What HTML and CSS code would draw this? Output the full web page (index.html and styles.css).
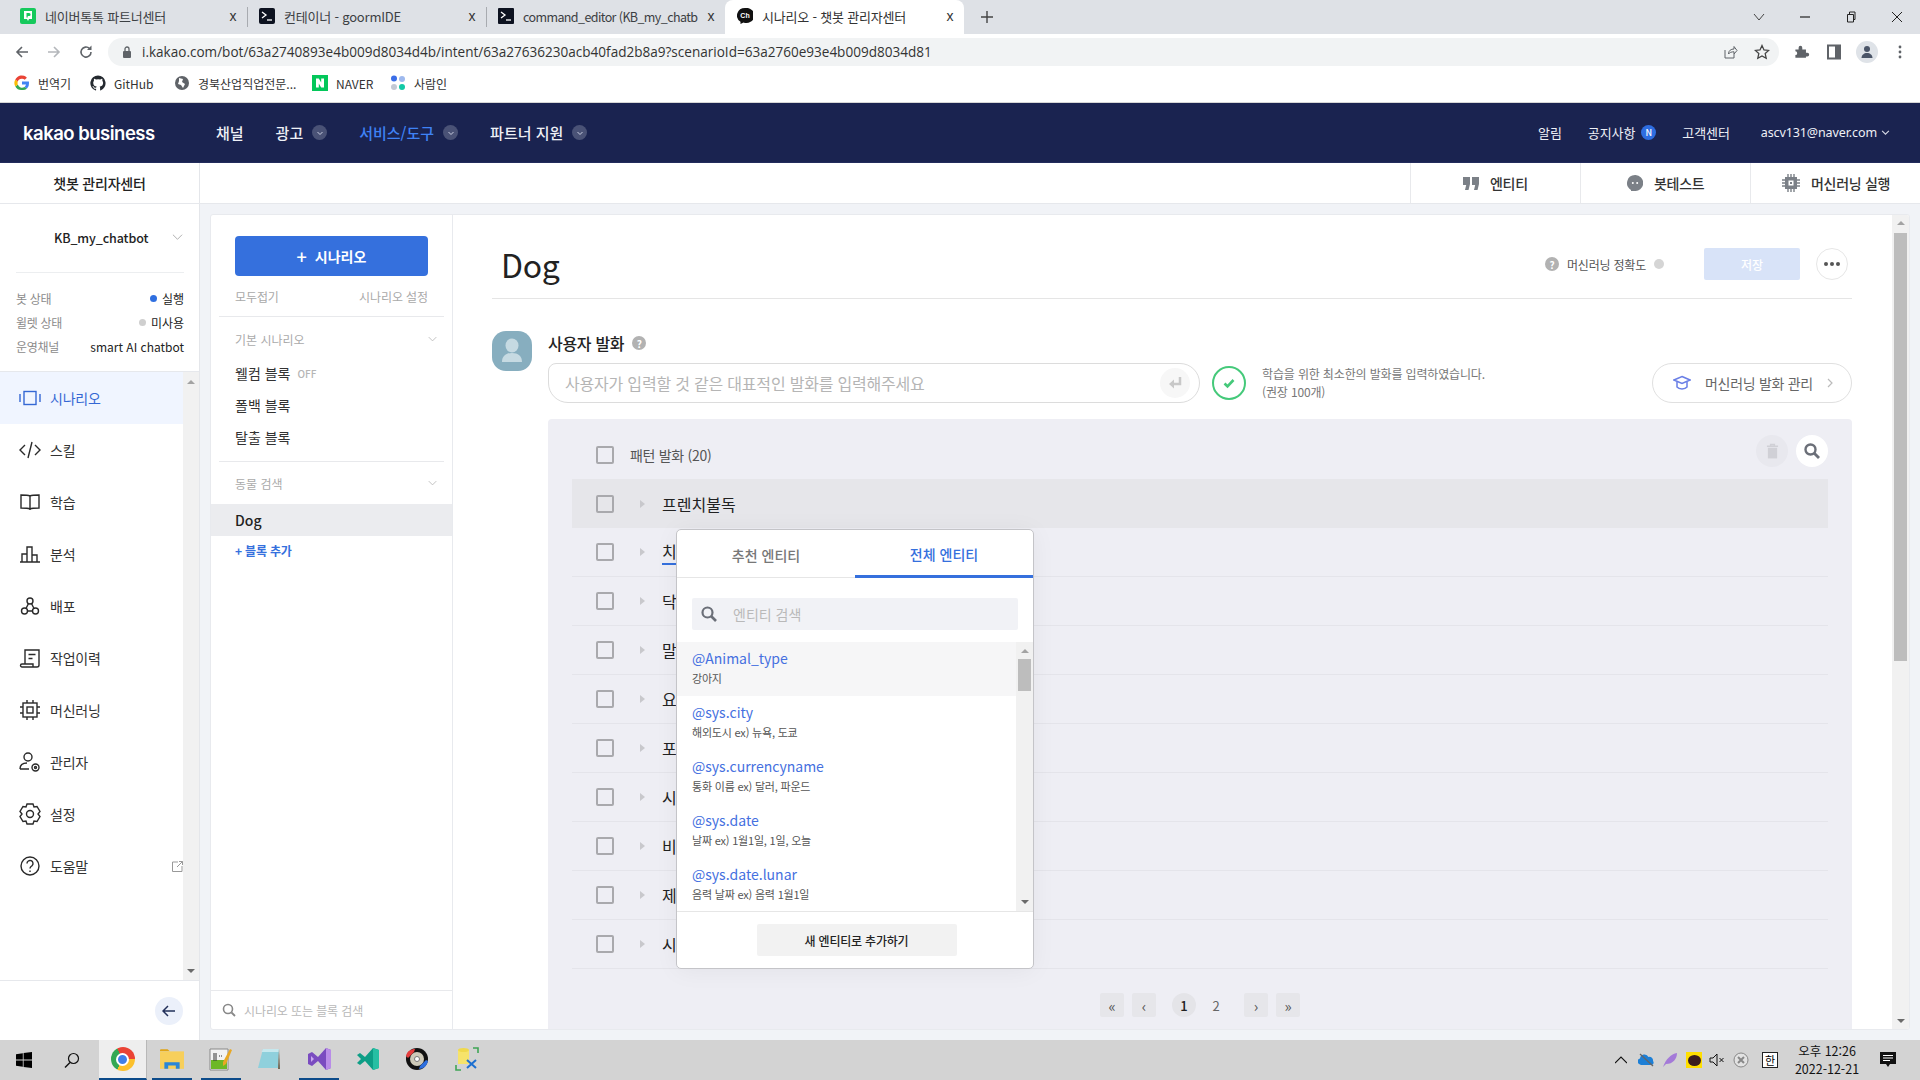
FILE: index.html
```html
<!DOCTYPE html>
<html lang="ko">
<head>
<meta charset="utf-8">
<title>시나리오 - 챗봇 관리자센터</title>
<link rel="stylesheet" href="styles.css">
</head>
<body>
<div class="tabstrip">
  <div class="tab">
    <svg class="fav" viewBox="0 0 16 16"><rect width="16" height="16" rx="2" fill="#16c95c"/><path d="M4 3h8v8H9l-1 2-1-2H4z" fill="#fff"/><path d="M6.500 5h2.600a1.400 1.400 0 010 3H7.700v1.500H6.500z" fill="#16c95c"/></svg>
    <span class="tab-title">네이버톡톡 파트너센터</span><span class="tab-x">x</span>
  </div>
  <div class="tab-sep"></div>
  <div class="tab">
    <svg class="fav" viewBox="0 0 16 16"><rect width="16" height="16" rx="2" fill="#0d1220"/><path d="M3 4l4 3-4 3" fill="none" stroke="#fff" stroke-width="1.300"/><path d="M8 12h5" stroke="#fff" stroke-width="1.300"/></svg>
    <span class="tab-title">컨테이너 - goormIDE</span><span class="tab-x">x</span>
  </div>
  <div class="tab-sep"></div>
  <div class="tab">
    <svg class="fav" viewBox="0 0 16 16"><rect width="16" height="16" rx="1" fill="#0d1220"/><path d="M3 4l4 3-4 3" fill="none" stroke="#fff" stroke-width="1.300"/><path d="M8 12h5" stroke="#fff" stroke-width="1.300"/></svg>
    <span class="tab-title tab-title-cond">command_editor (KB_my_chatb</span><span class="tab-x">x</span>
  </div>
  <div class="tab tab-active">
    <svg class="fav" viewBox="0 0 16 16"><path d="M8 0a8 7.500 0 00-4.500 13.700L3.500 16l3-1.600A8 7.500 0 108 0z" fill="#111"/><text x="8" y="10" font-size="7" font-weight="700" fill="#fff" text-anchor="middle" font-family="Liberation Sans">Ch</text></svg>
    <span class="tab-title">시나리오 - 챗봇 관리자센터</span><span class="tab-x">x</span>
  </div>
  <svg class="tab-plus" viewBox="0 0 12 12"><path d="M6 0v12M0 6h12" stroke="#444" stroke-width="1.400"/></svg>
  <div class="win-ctrl">
    <svg viewBox="0 0 12 12"><path d="M1 3l5 6 5-6" fill="none" stroke="#444"/></svg>
    <svg viewBox="0 0 12 12"><path d="M1 6h10" stroke="#222" stroke-width="1.200"/></svg>
    <svg viewBox="0 0 12 12"><path d="M2.500 3.500h6v7.500h-6zM4.500 3.500V1h5.500v7.500H8.500" fill="none" stroke="#222"/></svg>
    <svg viewBox="0 0 12 12"><path d="M1 1l10 10M11 1L1 11" stroke="#222"/></svg>
  </div>
</div>

<div class="toolbar">
  <svg class="tb-ic" viewBox="0 0 16 16"><path d="M14 8H3M8 3L3 8l5 5" fill="none" stroke="#5f6368" stroke-width="1.600"/></svg>
  <svg class="tb-ic" viewBox="0 0 16 16"><path d="M2 8h11M8 3l5 5-5 5" fill="none" stroke="#b4b7bb" stroke-width="1.600"/></svg>
  <svg class="tb-ic" viewBox="0 0 16 16"><path d="M13 8a5 5 0 11-1.500-3.500" fill="none" stroke="#5f6368" stroke-width="1.600"/><path d="M13.500 1.500v4.500H9z" fill="#5f6368"/></svg>
  <div class="omnibox">
    <svg class="lock" viewBox="0 0 10 12"><rect x="1" y="5" width="8" height="7" rx="1" fill="#5f6368"/><path d="M3 5V3a2 2 0 014 0v2" fill="none" stroke="#5f6368" stroke-width="1.300"/></svg>
    <span class="url">i.kakao.com/bot/63a2740893e4b009d8034d4b/intent/63a27636230acb40fad2b8a9?scenarioId=63a2760e93e4b009d8034d81</span>
    <svg class="omni-ic share" viewBox="0 0 16 16"><path d="M3 6v8h9v-4M6.500 10c0-3.500 2.500-5 5.500-5V2.500L15 6.500l-3 3.500V7.800c-2.500 0-4.500.7-5.500 2.200z" fill="none" stroke="#5f6368"/></svg>
    <svg class="omni-ic" viewBox="0 0 16 16"><path d="M8 1.500l2 4.400 4.700.5-3.500 3.200 1 4.700L8 11.900l-4.200 2.400 1-4.700L1.300 6.400 6 5.900z" fill="none" stroke="#444" stroke-width="1.300"/></svg>
  </div>
  <div class="tb-right">
    <svg viewBox="0 0 16 16"><path d="M1.500 6H5V4a2 2 0 014 0v2h4v3.500h1.500a2 2 0 010 4H13V15H1.500v-3a2 2 0 000-4z" fill="#5f6368" transform="scale(.92)"/></svg>
    <svg viewBox="0 0 16 16"><path d="M2 1.500h12v13H2zM10 2v12" fill="none" stroke="#5f6368" stroke-width="2"/><rect x="9" y="2" width="5" height="12" fill="#5f6368"/><rect x="4" y="3.500" width="5" height="9" fill="#fff"/></svg>
    <span class="profile"><svg viewBox="0 0 16 16"><circle cx="8" cy="5" r="3" fill="#4b5568"/><path d="M2.500 14c0-3 2.500-5 5.500-5s5.500 2 5.500 5z" fill="#4b5568"/></svg></span>
    <svg viewBox="0 0 16 16"><circle cx="8" cy="3" r="1.400" fill="#5f6368"/><circle cx="8" cy="8" r="1.400" fill="#5f6368"/><circle cx="8" cy="13" r="1.400" fill="#5f6368"/></svg>
  </div>
</div>

<div class="bookmarks">
  <span class="bm bm-1"><svg viewBox="0 0 16 16"><path d="M15 8.200c0-.6 0-1.100-.1-1.600H8v3h4a3.400 3.400 0 01-1.500 2.300l2.400 1.900A7 7 0 0015 8.200z" fill="#4285f4"/><path d="M8 15a7 7 0 004.900-1.200l-2.400-1.900A4.400 4.400 0 013.800 9.600l-2.500 1.900A7 7 0 008 15z" fill="#34a853"/><path d="M3.800 9.600a4.400 4.400 0 010-3L1.300 4.600a7 7 0 000 6.900z" fill="#fbbc05"/><path d="M8 3.800a3.800 3.800 0 012.700 1l2.200-2.100A7 7 0 001.300 4.600l2.500 2A4.200 4.200 0 018 3.800z" fill="#ea4335"/></svg>번역기</span>
  <span class="bm bm-2"><svg viewBox="0 0 16 16"><path d="M8 .500a7.700 7.700 0 00-2.400 15c.4.100.5-.2.500-.4v-1.400c-2.100.5-2.600-1-2.600-1-.3-.9-.8-1.100-.8-1.100-.7-.5.100-.5.100-.5.800.1 1.200.8 1.200.8.700 1.200 1.800.8 2.200.6.100-.5.300-.8.500-1-1.700-.2-3.500-.9-3.500-3.800 0-.8.300-1.500.8-2-.1-.2-.3-1 .1-2 0 0 .6-.2 2.100.8a7.300 7.300 0 013.900 0c1.500-1 2.100-.8 2.100-.8.400 1 .2 1.800.1 2 .5.500.8 1.200.8 2 0 3-1.800 3.600-3.500 3.800.3.200.5.700.5 1.400v2.100c0 .2.100.5.500.4A7.700 7.700 0 008 .500z" fill="#24292f"/></svg>GitHub</span>
  <span class="bm bm-3"><svg viewBox="0 0 16 16"><circle cx="8" cy="8" r="7" fill="#5f6368"/><path d="M5 3l4 1-1 3 3 2-2 4-2-3-3-1 1-3z" fill="#fff"/></svg>경북산업직업전문...</span>
  <span class="bm bm-4"><svg viewBox="0 0 16 16"><rect width="16" height="16" fill="#03c75a"/><path d="M4 3.500h2.800l2.400 4v-4H12v9H9.200l-2.400-4v4H4z" fill="#fff"/></svg>NAVER</span>
  <span class="bm bm-5"><svg viewBox="0 0 16 16"><circle cx="4" cy="3.500" r="3" fill="#3b6ee8"/><circle cx="12" cy="4" r="3" fill="#9eb9ee"/><circle cx="4" cy="12" r="3" fill="#c3c9d4"/><circle cx="12" cy="12" r="3" fill="#12c9a6"/></svg>사람인</span>
</div>

<header class="kheader">
  <span class="logo">kakao business</span>
  <nav class="knav">
    <span class="kn">채널</span>
    <span class="kn">광고<i class="kchev"><svg viewBox="0 0 8 8"><path d="M1.500 3l2.500 2.500L6.500 3" fill="none" stroke="#c9cde0"/></svg></i></span>
    <span class="kn kn-on">서비스/도구<i class="kchev"><svg viewBox="0 0 8 8"><path d="M1.500 3l2.500 2.500L6.500 3" fill="none" stroke="#c9cde0"/></svg></i></span>
    <span class="kn">파트너 지원<i class="kchev"><svg viewBox="0 0 8 8"><path d="M1.500 3l2.500 2.500L6.500 3" fill="none" stroke="#c9cde0"/></svg></i></span>
  </nav>
  <div class="kright">
    <span>알림</span>
    <span class="notice">공지사항<b class="nbadge">N</b></span>
    <span>고객센터</span>
    <span class="email">ascv131@naver.com<svg viewBox="0 0 8 8"><path d="M1 2.500L4 5.500 7 2.500" fill="none" stroke="#d5d8e5"/></svg></span>
  </div>
</header>

<div class="subheader">
  <div class="sub-left">챗봇 관리자센터</div>
  <div class="sub-tools">
    <div class="sub-tool st-1"><svg viewBox="0 0 16 16"><path d="M0 2h7v7l-1.500 6H2l1.200-5H0zM9 2h7v7l-1.500 6H11l1.200-5H9z" fill="#7b8087"/></svg>엔티티</div>
    <div class="sub-tool st-2"><svg viewBox="0 0 16 16"><path d="M8 0a8 8 0 00-4 14.900V16l3-.1A8 8 0 108 0z" fill="#7b8087"/><circle cx="5.800" cy="8" r="1" fill="#fff"/><circle cx="10.200" cy="8" r="1" fill="#fff"/></svg>봇테스트</div>
    <div class="sub-tool st-3"><svg viewBox="0 0 18 18"><path d="M6 0v18M9 0v18M12 0v18M0 6h18M0 9h18M0 12h18" stroke="#7b8087" stroke-width="1.400"/><rect x="3" y="3" width="12" height="12" fill="#7b8087"/><rect x="6.500" y="6.500" width="5" height="5" fill="#fff"/><rect x="8" y="8" width="2" height="2" fill="#7b8087"/></svg>머신러닝 실행</div>
  </div>
</div>

<div class="workspace">
  <aside class="sidebar">
    <div class="bot-select"><span>KB_my_chatbot</span><svg viewBox="0 0 12 8"><path d="M1 1.500l5 5 5-5" fill="none" stroke="#aaa"/></svg></div>
    <dl class="bot-info">
      <div class="bi-row"><dt>봇 상태</dt><dd><i class="dot dot-blue"></i>실행</dd></div>
      <div class="bi-row"><dt>윌렛 상태</dt><dd><i class="dot dot-gray"></i>미사용</dd></div>
      <div class="bi-row"><dt>운영채널</dt><dd>smart AI chatbot</dd></div>
    </dl>
    <div class="side-nav-wrap">
      <ul class="side-nav">
        <li class="sn sn-on"><svg class="ic" viewBox="0 0 22 22"><path d="M1 7v8M21 7v8"/><rect x="5" y="4.500" width="12" height="13"/></svg>시나리오</li>
        <li class="sn"><svg class="ic" viewBox="0 0 22 22"><path d="M6 6l-5 5 5 5M16 6l5 5-5 5M13 3L9 19"/></svg>스킬</li>
        <li class="sn"><svg class="ic" viewBox="0 0 22 22"><path d="M11 5c-2-1-6-1-9-1v13c3 0 7 0 9 1 2-1 6-1 9-1V4c-3 0-7 0-9 1zM11 5v14"/></svg>학습</li>
        <li class="sn"><svg class="ic" viewBox="0 0 22 22"><path d="M1 19h20M3 19v-8h5v8M8 19V4h5v15M13 19v-7h5v7"/></svg>분석</li>
        <li class="sn"><svg class="ic" viewBox="0 0 22 22"><circle cx="11" cy="6" r="3"/><circle cx="5.500" cy="16" r="3"/><circle cx="16.500" cy="16" r="3"/><path d="M8.500 16h5M9.500 8.500l-2.500 5M12.500 8.500l2.500 5"/></svg>배포</li>
        <li class="sn"><svg class="ic" viewBox="0 0 22 22"><path d="M6 17V3h14v15a2 2 0 01-2 2H3a1.500 1.500 0 010-3h11v3"/><path d="M9.500 7.500h7M9.500 11.500h4"/></svg>작업이력</li>
        <li class="sn"><svg class="ic" viewBox="0 0 22 22"><rect x="4" y="4" width="14" height="14"/><rect x="8" y="8" width="6" height="6"/><path d="M8 1v3M14 1v3M8 18v3M14 18v3M1 8h3M1 14h3M18 8h3M18 14h3"/></svg>머신러닝</li>
        <li class="sn"><svg class="ic" viewBox="0 0 22 22"><circle cx="9" cy="6" r="4"/><path d="M1 18c0-4 3-6 7-6M1 18h9"/><circle cx="16.500" cy="16.500" r="3.500"/><circle cx="16.500" cy="16.500" r="1"/></svg>관리자</li>
        <li class="sn"><svg class="ic" viewBox="0 0 22 22"><path d="M8 2h6l1 3 3-.5 3 5-2 2.500 2 2.500-3 5-3-.5-1 3H8l-1-3-3 .5-3-5L3 12 1 9.500l3-5 3 .5z" transform="translate(0 -1)"/><circle cx="11" cy="11" r="3.500"/></svg>설정</li>
        <li class="sn"><svg class="ic" viewBox="0 0 22 22"><circle cx="11" cy="11" r="9"/><path d="M8 8.500a3 3 0 115 2.200c-1 .8-2 1.300-2 2.800M11 15.500v1.500"/></svg>도움말<svg class="ext" viewBox="0 0 11 11"><path d="M6 1H.5v9.500H10V5M5 6l5.500-5.500M7 .5h3.500V4" fill="none" stroke="#999"/></svg></li>
      </ul>
      <div class="vscroll side-scroll"><i class="arr-up"></i><i class="arr-down"></i></div>
    </div>
    <div class="side-foot"><span class="backbtn"><svg viewBox="0 0 14 14"><path d="M13 7H1M6 2L1 7l5 5" fill="none" stroke="#22305a" stroke-width="1.500"/></svg></span></div>
  </aside>

  <div class="card">
    <section class="panel">
      <div class="panel-top">
        <button class="btn-add"><span class="plus">+</span>시나리오</button>
        <div class="panel-links"><span>모두접기</span><span>시나리오 설정</span></div>
      </div>
      <div class="group">
        <div class="group-head"><span>기본 시나리오</span><svg viewBox="0 0 12 8"><path d="M1 1.500l5 5 5-5" fill="none" stroke="#bbb" stroke-width="1.200"/></svg></div>
        <div class="blk">웰컴 블록<em>OFF</em></div>
        <div class="blk">폴백 블록</div>
        <div class="blk">탈출 블록</div>
      </div>
      <div class="group group-2">
        <div class="group-head"><span>동물 검색</span><svg viewBox="0 0 12 8"><path d="M1 1.500l5 5 5-5" fill="none" stroke="#bbb" stroke-width="1.200"/></svg></div>
        <div class="blk blk-on">Dog</div>
        <div class="blk-add">+ 블록 추가</div>
      </div>
      <div class="panel-search"><svg viewBox="0 0 14 14"><circle cx="6" cy="6" r="4.500" fill="none" stroke="#888" stroke-width="1.600"/><path d="M9.500 9.500L13 13" stroke="#888" stroke-width="1.800"/></svg>시나리오 또는 블록 검색</div>
    </section>

    <main class="main">
      <div class="main-head">
        <h1>Dog</h1>
        <div class="head-right">
          <i class="qmark">?</i><span class="acc">머신러닝 정확도</span><i class="acc-dot"></i>
          <button class="btn-save">저장</button>
          <span class="btn-more"><i></i><i></i><i></i></span>
        </div>
      </div>

      <div class="utter">
        <div class="avatar"><svg viewBox="0 0 40 40"><ellipse cx="20" cy="14.500" rx="6.500" ry="7" fill="#c6dae2"/><path d="M10 31c0-6 4-9 10-9s10 3 10 9z" fill="#c6dae2"/></svg></div>
        <div class="utter-body">
          <div class="utter-title"><span>사용자 발화</span><i class="qmark">?</i></div>
          <div class="utter-input-row">
            <div class="utter-input"><span>사용자가 입력할 것 같은 대표적인 발화를 입력해주세요</span><i class="enter"><svg viewBox="0 0 16 16"><path d="M13 2v7H5" fill="none" stroke="#c8c8c8" stroke-width="2.500"/><path d="M7 4.500L2 9l5 4.500z" fill="#c8c8c8"/></svg></i></div>
            <span class="okcheck"><svg viewBox="0 0 16 16"><path d="M3.500 8.500l3 2.800L12.500 5" fill="none" stroke="#45c97a" stroke-width="2.600"/></svg></span>
            <p class="oktext">학습을 위한 최소한의 발화를 입력하였습니다.<br>(권장 100개)</p>
            <div class="btn-ml"><svg viewBox="0 0 18 16"><path d="M9 1.500L17 5 9 8.500 1 5z" fill="none" stroke="#6a7fe6" stroke-width="1.500"/><path d="M4 7v5c2 2.500 8 2.500 10 0V7" fill="none" stroke="#6a7fe6" stroke-width="1.500"/></svg><span>머신러닝 발화 관리</span><svg class="ml-chev" viewBox="0 0 6 10"><path d="M1 1l4 4-4 4" fill="none" stroke="#bbb" stroke-width="1.200"/></svg></div>
          </div>

          <div class="patterns">
            <div class="pat-head">
              <i class="chk"></i><span class="pat-title">패턴 발화 (20)</span>
              <span class="roundbtn rb-trash"><svg viewBox="0 0 14 16"><path d="M1 3h12M5 3V1h4v2" stroke="#d0d0d6" stroke-width="1.600" fill="none"/><path d="M2 4.500h10V16H2z" fill="#d0d0d6"/></svg></span>
              <span class="roundbtn rb-search"><svg viewBox="0 0 16 16"><circle cx="6.500" cy="6.500" r="5" fill="none" stroke="#6b6f78" stroke-width="2.400"/><path d="M10 10l5 5" stroke="#6b6f78" stroke-width="2.800"/></svg></span>
            </div>
            <div class="pat-row pat-row-hl"><i class="chk"></i><i class="tri"></i>프렌치불독</div>
            <div class="pat-row"><i class="chk"></i><i class="tri"></i><span class="pat-cut tagged">치</span></div>
            <div class="pat-row"><i class="chk"></i><i class="tri"></i><span class="pat-cut">닥</span></div>
            <div class="pat-row"><i class="chk"></i><i class="tri"></i><span class="pat-cut">말</span></div>
            <div class="pat-row"><i class="chk"></i><i class="tri"></i><span class="pat-cut">요</span></div>
            <div class="pat-row"><i class="chk"></i><i class="tri"></i><span class="pat-cut">포</span></div>
            <div class="pat-row"><i class="chk"></i><i class="tri"></i><span class="pat-cut">시</span></div>
            <div class="pat-row"><i class="chk"></i><i class="tri"></i><span class="pat-cut">비</span></div>
            <div class="pat-row"><i class="chk"></i><i class="tri"></i><span class="pat-cut">제</span></div>
            <div class="pat-row"><i class="chk"></i><i class="tri"></i><span class="pat-cut">시</span></div>
            <div class="pager">
              <span class="pg pg-box">«</span><span class="pg pg-box">‹</span>
              <span class="pg pg-cur">1</span><span class="pg pg-num">2</span>
              <span class="pg pg-box">›</span><span class="pg pg-box">»</span>
            </div>

            <div class="popup">
              <div class="pop-tabs"><span class="pt">추천 엔티티</span><span class="pt pt-on">전체 엔티티</span></div>
              <div class="pop-search"><svg viewBox="0 0 16 16"><circle cx="6.500" cy="6.500" r="5" fill="none" stroke="#6b6f78" stroke-width="2.200"/><path d="M10 10l5 5" stroke="#6b6f78" stroke-width="2.600"/></svg>엔티티 검색</div>
              <div class="pop-list">
                <ul>
                  <li class="pi-on"><b>@Animal_type</b><small>강아지</small></li>
                  <li><b>@sys.city</b><small>해외도시 ex) 뉴욕, 도쿄</small></li>
                  <li><b>@sys.currencyname</b><small>통화 이름 ex) 달러, 파운드</small></li>
                  <li><b>@sys.date</b><small>날짜 ex) 1월1일, 1일, 오늘</small></li>
                  <li><b>@sys.date.lunar</b><small>음력 날짜 ex) 음력 1월1일</small></li>
                </ul>
                <div class="vscroll pop-scroll"><i class="arr-up"></i><i class="pop-thumb"></i><i class="arr-down"></i></div>
              </div>
              <div class="pop-foot"><span class="btn-newent">새 엔티티로 추가하기</span></div>
            </div>
          </div>
        </div>
      </div>
    </main>
    <div class="vscroll main-scroll"><i class="arr-up"></i><i class="main-thumb"></i><i class="arr-down"></i></div>
  </div>
</div>

<footer class="taskbar">
  <svg class="t-start" viewBox="0 0 16 16"><path d="M0 2.200l6.800-1v6.300H0zM7.600 1.100L16 0v7.500H7.600zM0 8.400h6.800v6.400l-6.800-1zM7.600 8.400H16V16l-8.400-1.100z" fill="#000"/></svg>
  <svg class="t-search" viewBox="0 0 16 16"><circle cx="9.500" cy="6.500" r="5" fill="none" stroke="#111" stroke-width="1.200"/><path d="M6 10.500L1 15.500" stroke="#111" stroke-width="1.400"/></svg>
  <span class="t-app t-chrome"><i class="chrome"><i></i></i></span>
  <span class="t-app t-files"><svg viewBox="0 0 22 20"><path d="M0 2a1 1 0 011-1h6l2 2H0z" fill="#e0a416"/><path d="M0 3h22v16H0z" fill="#f7cf5b"/><path d="M4 13h14v6h-3.500v-3h-7v3H4z" fill="#2a86d8"/></svg></span>
  <span class="t-app t-npp"><svg viewBox="0 0 24 24"><path d="M1 2h18v21H1z" fill="#f3f3f3" stroke="#888"/><path d="M2 13h16v9H2z" fill="#6db827"/><path d="M5 6v8M7 6v8M10 9h1M12 9h1" stroke="#333"/><path d="M14 15L21 2l2 1-6 14-3 2z" fill="#e9a823"/></svg></span>
  <span class="t-app t-note"><svg viewBox="0 0 24 24"><path d="M6 2h16l-1 19H1z" fill="#8fd0dc"/><path d="M6 2h16l-.2 3H4.500z" fill="#c6e8ee"/><path d="M22 2l1 20h-2z" fill="#6d6552"/></svg></span>
  <span class="t-app t-vs"><svg viewBox="0 0 24 24"><path d="M1 7l4-2 6 5L19 1l5 2v18l-5 2-8-9-6 5-4-2z" fill="#7a4bc0"/><path d="M19 1l5 2v18l-5 2z" fill="#b98ce8"/><path d="M4 9v6l3-3z" fill="#c9a8f0"/></svg></span>
  <span class="t-app t-code"><svg viewBox="0 0 24 24"><path d="M1 8l3-2 5 4 8-9 6 2v18l-6 2-8-9-5 4-3-2 4-4z" fill="#0d9e86"/><path d="M17 1l6 2v18l-6 2z" fill="#26bfa3"/></svg></span>
  <span class="t-app t-disc"><svg viewBox="0 0 24 24"><circle cx="12" cy="12" r="11" fill="#111"/><circle cx="12" cy="12" r="7" fill="#cdc9b8"/><circle cx="12" cy="12" r="2.500" fill="#fff" stroke="#777"/><path d="M1 9C2 4 6 2 10 2L9 5 3 11z" fill="#e53d3d"/><path d="M23 14c-1 5-5 8-9 8l1-3 6-6z" fill="#2d6fe0"/></svg></span>
  <span class="t-app t-tool"><svg viewBox="0 0 24 24"><path d="M1 18v5h5M18 1h5v5" fill="none" stroke="#3fa556" stroke-width="1.600"/><path d="M3 3h11v14H3z" fill="#f6e36a"/><ellipse cx="8.500" cy="3" rx="5.500" ry="2" fill="#f0d94c"/><path d="M12 13l9 8M21 13l-9 8" stroke="#1c6fd0" stroke-width="2"/></svg></span>
  <div class="tray">
    <svg class="tr-chev" viewBox="0 0 12 8"><path d="M0 7l6-6 6 6" fill="none" stroke="#111" stroke-width="1.100"/></svg>
    <svg class="tr-cloud" viewBox="0 0 16 16"><path d="M1 12a3 3 0 011-5.500A4.500 4.500 0 0110.500 5 3.500 3.500 0 0115 9a2.500 2.500 0 01-1 4H3z" fill="#1d7fd6"/><path d="M2 2l13 12" stroke="#666" stroke-width="1.300"/></svg>
    <svg class="tr-feather" viewBox="0 0 16 16"><path d="M1 15C4 7 9 2 15 1c0 6-4 11-11 11z" fill="#a47ad8"/></svg>
    <span class="tr-kakao"><i></i></span>
    <svg class="tr-mute" viewBox="0 0 16 16"><path d="M1 6h3l4-4v12l-4-4H1z" fill="none" stroke="#111"/><path d="M10.500 6l4 4M14.500 6l-4 4" stroke="#111"/></svg>
    <svg class="tr-x" viewBox="0 0 16 16"><circle cx="8" cy="8" r="7" fill="#e2e2e2" stroke="#888"/><path d="M5 5l6 6M11 5l-6 6" stroke="#888" stroke-width="2"/></svg>
    <span class="tr-ime">한</span>
    <span class="tr-clock">오후 12:26<br>2022-12-21</span>
    <svg class="tr-msg" viewBox="0 0 16 16"><path d="M0 0h16v12h-6l-2 3-2-3H0z" fill="#111"/><path d="M3 3.500h10M3 6h10M3 8.500h7" stroke="#fff"/></svg>
  </div>
</footer>
</body>
</html>
```
FILE: styles.css
```css
* { box-sizing: border-box; }
html, body { margin: 0; padding: 0; }
body { width: 1920px; height: 1080px; overflow: hidden; display: flex; flex-direction: column; background: #f1f3f7; color: #222; font-family: "Noto Sans CJK KR", "Noto Sans", sans-serif; font-size: 12px; }
i, em { font-style: normal; }
ul, dl, dd, p, h1 { margin: 0; padding: 0; list-style: none; }
button { font-family: inherit; border: 0; }
svg { display: block; flex: none; }

/* browser chrome */
.tabstrip { height: 34px; flex: none; background: #dee1e6; display: flex; align-items: flex-end; padding-left: 8px; }
.tab { width: 239px; height: 34px; display: flex; align-items: center; padding: 0 0 2px 12px; color: #3c4043; flex: none; }
.tab-active { background: #fff; border-radius: 8px 8px 0 0; color: #333; }
.fav { width: 16px; height: 16px; margin-right: 9px; }
.tab-title { width: 177px; overflow: hidden; white-space: nowrap; font-size: 13px; letter-spacing: -0.2px; }
.tab-title-cond { font-size: 12.500px; letter-spacing: -0.600px; }
.tab-x { width: 14px; font-size: 14px; line-height: 1; color: #333; text-align: center; margin-left: 4px; font-family: "Liberation Sans", sans-serif; }
.tab-sep { width: 1px; height: 20px; background: #a8abb0; align-self: center; margin-right: -1px; }
.tab-plus { width: 12px; height: 12px; margin: 0 0 11px 17px; }
.win-ctrl { margin-left: auto; height: 34px; display: flex; align-items: center; gap: 34px; padding-right: 17px; }
.win-ctrl svg { width: 12px; height: 12px; }
.toolbar { height: 36px; flex: none; background: #fff; display: flex; align-items: center; padding-left: 14px; }
.tb-ic { width: 16px; height: 16px; margin-right: 16px; }
.omnibox { width: 1671px; height: 28px; margin-left: -2px; background: #f1f3f4; border-radius: 14px; display: flex; align-items: center; padding: 0 9px 0 14px; }
.lock { width: 10px; height: 12px; margin-right: 10px; }
.url { font-family: "Open Sans", sans-serif; font-size: 13.550px; color: #333; white-space: nowrap; }
.omni-ic { width: 16px; height: 16px; }
.share { margin-left: auto; margin-right: 16px; }
.tb-right { display: flex; align-items: center; gap: 16px; margin-left: 15px; }
.tb-right svg { width: 16px; height: 16px; }
.profile { width: 22px; height: 22px; border-radius: 50%; background: #dfe3e8; display: flex; align-items: center; justify-content: center; margin: 0 -2px; }
.bookmarks { height: 33px; flex: none; background: #fff; border-bottom: 1px solid #d6d6d6; display: flex; align-items: center; padding: 0 0 6px 14px; font-size: 12px; color: #333; }
.bm { display: flex; align-items: center; gap: 8px; white-space: nowrap; }
.bm svg { width: 16px; height: 16px; }
.bm-1 { width: 76px; }
.bm-2 { width: 87px; }
.bm-3 { width: 129px; margin-left: -3px; }
.bm-4 { width: 78px; margin-left: 9px; }
.bm-5 { margin-left: 0; }

/* kakao header */
.kheader { height: 60px; flex: none; background: #1a2350; color: #fff; display: flex; align-items: center; padding-left: 23px; border-bottom: 1px solid #232c5c; }
.logo { font-family: "Inter", sans-serif; font-weight: 600; font-size: 18.500px; letter-spacing: -0.500px; width: 193px; white-space: nowrap; }
.knav { display: flex; align-items: center; font-size: 15px; font-weight: 500; color: #eef0f6; gap: 32px; }
.kn { display: flex; align-items: center; gap: 9px; white-space: nowrap; }
.kn-on { color: #3f82f5; }
.kchev { width: 15px; height: 15px; border-radius: 50%; background: #4a5276; display: flex; align-items: center; justify-content: center; }
.kchev svg { width: 8px; height: 8px; }
.kright { margin-left: auto; display: flex; align-items: center; font-size: 13px; color: #eef0f6; gap: 26px; padding-right: 30px; letter-spacing: -0.100px; }
.notice { display: flex; align-items: center; gap: 6px; }
.nbadge { width: 15px; height: 15px; border-radius: 50%; background: #2e6de0; color: #fff; font-size: 9px; display: flex; align-items: center; justify-content: center; font-weight: 500; }
.email { display: flex; align-items: center; gap: 4px; font-family: "Noto Sans", sans-serif; font-size: 12.500px; letter-spacing: -0.100px; margin-left: 5px; }
.email svg { width: 9px; height: 9px; }
.subheader { height: 41px; flex: none; background: #fff; border-bottom: 1px solid #e6e8ec; display: flex; }
.sub-left { width: 200px; border-right: 1px solid #e4e6ea; display: flex; align-items: center; justify-content: center; font-size: 14px; font-weight: 500; color: #222; letter-spacing: -0.200px; }
.sub-tools { margin-left: auto; display: flex; }
.sub-tool { height: 40px; border-left: 1px solid #e8e9ec; display: flex; align-items: center; font-size: 14px; font-weight: 500; color: #333; letter-spacing: -0.300px; }
.sub-tool svg { width: 16px; height: 16px; margin-right: 11px; }
.st-1 { width: 170px; padding-left: 52px; }
.st-2 { width: 170px; padding-left: 46px; }
.st-3 { width: 170px; padding-left: 31px; }
.st-3 svg { width: 18px; height: 18px; margin-right: 11px; }

/* workspace */
.workspace { height: 836px; flex: none; display: flex; }
.sidebar { width: 200px; flex: none; background: #fff; border-right: 1px solid #e4e6ea; display: flex; flex-direction: column; }
.bot-select { height: 68px; margin: 0 16px 0 0; padding: 0 0 2px 54px; display: flex; align-items: center; justify-content: space-between; font-size: 12.500px; font-weight: 500; flex: none; letter-spacing: -0.100px; }
.bot-select svg { width: 11px; height: 8px; }
.bot-info { margin: 0 15px 0 16px; border-top: 1px solid #eceef0; padding-top: 13px; height: 99px; flex: none; }
.bi-row { height: 24px; display: flex; align-items: center; justify-content: space-between; font-size: 12px; }
.bi-row dt { color: #8b8b8b; letter-spacing: -0.300px; }
.bi-row dd { color: #222; display: flex; align-items: center; gap: 5px; }
.dot { width: 7px; height: 7px; border-radius: 50%; display: block; }
.dot-blue { background: #2f6fe0; }
.dot-gray { background: #cfcfcf; }
.side-nav-wrap { height: 610px; flex: none; display: flex; border-top: 1px solid #e6e8ec; border-bottom: 1px solid #e6e8ec; }
.side-nav { flex: 1; }
.sn { height: 52px; display: flex; align-items: center; padding-left: 19px; font-size: 14px; color: #333; gap: 9px; letter-spacing: -0.200px; }
.sn-on { background: #f0f5ff; color: #3568d4; }
.sn .ic { width: 22px; height: 22px; fill: none; stroke: #2a2a2a; stroke-width: 1.400; }
.sn-on .ic { stroke: #3568d4; }
.ext { width: 11px; height: 11px; margin-left: auto; }
.vscroll { background: #f1f1f1; position: relative; display: flex; flex-direction: column; align-items: center; flex: none; }
.side-scroll { width: 16px; justify-content: space-between; padding: 8px 0 7px; }
.arr-up { width: 0; height: 0; border-left: 4px solid transparent; border-right: 4px solid transparent; border-bottom: 4px solid #a3a3a3; }
.arr-down { width: 0; height: 0; border-left: 4px solid transparent; border-right: 4px solid transparent; border-top: 4px solid #6a6a6a; }
.side-foot { flex: 1; display: flex; align-items: flex-start; justify-content: flex-end; padding: 16px 16px 0 0; }
.backbtn { width: 28px; height: 28px; border-radius: 50%; background: #ebf0fa; display: flex; align-items: center; justify-content: center; }
.backbtn svg { width: 14px; height: 14px; }

.card { width: 1700px; height: 816px; margin: 10px 0 0 10px; background: #fff; border: 1px solid #e8eaee; border-radius: 3px; display: flex; overflow: hidden; flex: none; }
.panel { width: 242px; flex: none; border-right: 1px solid #e8eaee; display: flex; flex-direction: column; }
.panel-top { padding: 21px 24px 0 24px; height: 101px; }
.btn-add { width: 193px; height: 40px; background: #3570dd; color: #fff; font-size: 14px; font-weight: 700; border-radius: 4px; display: flex; align-items: center; justify-content: center; gap: 8px; }
.plus { font-size: 18px; line-height: 1; font-weight: 500; }
.panel-links { display: flex; justify-content: space-between; margin-top: 12px; font-size: 12px; color: #a9a9a9; letter-spacing: -0.100px; }
.group { margin: 0 8px; border-top: 1px solid #e8e9ec; padding-top: 9px; height: 145px; }
.group-head { height: 26px; display: flex; align-items: center; justify-content: space-between; padding: 0 7px 0 16px; font-size: 12px; color: #aaa; margin-bottom: 5px; }
.group-head svg { width: 9px; height: 6px; }
.blk { height: 32px; display: flex; align-items: center; padding-left: 16px; font-size: 14px; color: #333; }
.blk em { font-size: 10px; font-weight: 500; color: #b5b5b5; margin-left: 7px; }
.group-2 { margin: 0; padding-top: 10px; height: auto; border-top: 0; }
.group-2::before { content: ""; display: block; border-top: 1px solid #e8e9ec; margin: -10px 8px 8px; }
.group-2 .group-head { padding: 0 15px 0 24px; margin-bottom: 8px; }
.group-2 .blk { padding-left: 24px; }
.blk-on { background: #ebecef; font-weight: 500; color: #222; }
.blk-add { padding-left: 24px; margin-top: 6px; font-size: 12px; font-weight: 700; color: #3570dd; letter-spacing: -0.200px; }
.panel-search { margin-top: auto; height: 39px; border-top: 1px solid #e8e9ec; display: flex; align-items: center; padding-left: 11px; gap: 8px; font-size: 12px; color: #b8b8b8; letter-spacing: -0.100px; }
.panel-search svg { width: 14px; height: 14px; }

.main { width: 1439px; flex: none; padding: 0 40px 0 39px; overflow: hidden; }
.main-head { height: 84px; border-bottom: 1px solid #e5e5e5; display: flex; align-items: flex-start; justify-content: space-between; padding-left: 9px; }
.main-head h1 { font-size: 32px; font-weight: 400; line-height: 46px; margin-top: 26px; color: #222; letter-spacing: -0.300px; }
.head-right { display: flex; align-items: center; height: 32px; margin: 33px 4px 0 0; }
.qmark { width: 14px; height: 14px; border-radius: 50%; background: #b2b2b2; color: #fff; font-size: 10px; font-weight: 700; display: flex; align-items: center; justify-content: center; }
.acc { margin-left: 8px; font-size: 12px; color: #555; letter-spacing: -0.200px; }
.acc-dot { width: 10px; height: 10px; border-radius: 50%; background: #d5d5d5; margin-left: 8px; }
.btn-save { width: 96px; height: 32px; margin-left: 40px; background: #d8e3f8; color: #fff; font-size: 12px; font-weight: 500; border-radius: 2px; }
.btn-more { width: 32px; height: 32px; border: 1px solid #e6e6e6; border-radius: 50%; margin-left: 16px; display: flex; align-items: center; justify-content: center; gap: 2px; }
.btn-more i { width: 4px; height: 4px; border-radius: 50%; background: #555; }

.utter { display: flex; gap: 16px; margin-top: 32px; }
.avatar { width: 40px; height: 40px; flex: none; background: #87aebf; border-radius: 14px; }
.avatar svg { width: 40px; height: 40px; }
.utter-body { flex: 1; min-width: 0; }
.utter-title { height: 32px; display: flex; align-items: center; gap: 8px; font-size: 16px; font-weight: 500; color: #222; padding-bottom: 8px; letter-spacing: -0.300px; }
.utter-input-row { height: 40px; display: flex; align-items: center; }
.utter-input { width: 652px; height: 40px; border: 1px solid #dcdcdc; border-radius: 8px 20px 20px 20px; display: flex; align-items: center; justify-content: space-between; padding: 0 9px 0 16px; font-size: 16px; color: #b5b5b5; letter-spacing: -0.200px; }
.enter { width: 30px; height: 30px; border-radius: 50%; background: #f7f7f7; display: flex; align-items: center; justify-content: center; }
.enter svg { width: 16px; height: 16px; }
.okcheck { width: 34px; height: 34px; margin-left: 12px; border: 2px solid #45c97a; border-radius: 50%; display: flex; align-items: center; justify-content: center; flex: none; }
.okcheck svg { width: 16px; height: 16px; }
.oktext { margin-left: 16px; font-size: 12px; line-height: 18px; color: #777; letter-spacing: -0.150px; white-space: nowrap; }
.btn-ml { margin-left: auto; width: 200px; height: 40px; border: 1px solid #e0e0e0; border-radius: 20px; display: flex; align-items: center; padding-left: 20px; font-size: 14px; color: #666; letter-spacing: -0.300px; }
.btn-ml svg { width: 18px; height: 16px; margin-right: 14px; }
.btn-ml .ml-chev { width: 6px; height: 10px; margin: 0 0 0 14px; }

.patterns { position: relative; margin-top: 16px; height: 640px; background: #eeeef4; border-radius: 4px 4px 0 0; padding: 0 24px; }
.pat-head { height: 60px; display: flex; align-items: center; padding: 12px 0 0 24px; }
.chk { width: 18px; height: 18px; border: 2px solid #a9a9ad; border-radius: 2px; background: transparent; flex: none; display: block; }
.pat-title { margin-left: 16px; font-size: 14px; color: #555; letter-spacing: -0.300px; }
.roundbtn { width: 32px; height: 32px; border-radius: 50%; display: flex; align-items: center; justify-content: center; margin-bottom: 8px; }
.rb-trash { margin-left: auto; background: #e8e8ee; }
.rb-trash svg { width: 13px; height: 16px; }
.rb-search { margin-left: 8px; background: #fff; }
.rb-search svg { width: 16px; height: 16px; }
.pat-row { height: 49px; display: flex; align-items: center; padding-left: 24px; border-bottom: 1px solid #e4e4ea; font-size: 16px; color: #222; }
.pat-row-hl { background: #e6e6ea; border-bottom: 0; }
.tri { width: 0; height: 0; border-top: 4px solid transparent; border-bottom: 4px solid transparent; border-left: 5px solid #c8c8cc; margin: 0 17px 0 26px; flex: none; }
.pat-cut { width: 14px; overflow: hidden; white-space: nowrap; }
.tagged { border-bottom: 2px solid #3570dd; }
.pager { display: flex; align-items: center; justify-content: center; margin-top: 24px; }
.pg { width: 24px; height: 24px; display: flex; align-items: center; justify-content: center; font-size: 13px; color: #666; margin-right: 8px; border-radius: 2px; }
.pg:last-child { margin-right: 0; }
.pg-box { background: #e6e6ea; font-size: 15px; color: #555; }
.pg-cur { background: #e4e4e8; border-radius: 50%; margin-left: 8px; color: #222; font-weight: 500; }
.pg-num { margin-right: 16px; }
.popup { position: absolute; left: 128px; top: 110px; width: 358px; height: 440px; background: #fff; border: 1px solid #c4c4c8; border-radius: 5px; box-shadow: 0 2px 24px rgba(0,0,0,.05); display: flex; flex-direction: column; overflow: hidden; }
.pop-tabs { height: 48px; flex: none; display: flex; border-bottom: 1px solid #e6e6e6; }
.pt { width: 50%; display: flex; align-items: center; justify-content: center; font-size: 14px; font-weight: 500; color: #777; padding-top: 3px; }
.pt-on { color: #3570dd; border-bottom: 3px solid #3570dd; margin-bottom: -1px; }
.pop-search { height: 32px; flex: none; margin: 20px 15px 12px; background: #f1f2f6; border-radius: 2px; display: flex; align-items: center; padding-left: 9px; gap: 16px; font-size: 14px; color: #b9b9b9; }
.pop-search svg { width: 16px; height: 16px; }
.pop-list { height: 270px; flex: none; display: flex; border-bottom: 1px solid #e6e6e6; }
.pop-list ul { flex: 1; }
.pop-list li { height: 54px; padding: 6px 0 0 15px; }
.pi-on { background: #f6f6f7; }
.pop-list b { display: block; font-weight: 400; font-size: 14px; line-height: 20px; color: #4570e0; }
.pop-list small { display: block; font-size: 11px; line-height: 18px; margin-top: 1px; color: #555; letter-spacing: -0.200px; }
.pop-scroll { width: 17px; padding-top: 7px; }
.pop-thumb { width: 13px; height: 32px; margin-top: 6px; background: #bdbdbd; }
.pop-scroll .arr-down { margin-top: auto; margin-bottom: 7px; }
.pop-foot { flex: 1; display: flex; align-items: center; justify-content: center; padding-left: 3px; }
.btn-newent { width: 200px; height: 32px; background: #f2f2f2; border-radius: 2px; display: flex; align-items: center; justify-content: center; font-size: 12px; font-weight: 500; color: #222; letter-spacing: -0.200px; }
.main-scroll { width: 17px; padding: 6px 0; }
.main-thumb { width: 13px; height: 428px; margin-top: 8px; background: #bdbdbd; }
.main-scroll .arr-down { margin-top: auto; }

/* taskbar */
.taskbar { height: 40px; flex: none; background: #d3d3d3; display: flex; align-items: center; padding-left: 16px; }
.t-start { width: 16px; height: 16px; }
.t-search { width: 16px; height: 16px; margin-left: 32px; }
.t-app { height: 40px; display: flex; align-items: center; justify-content: center; border-bottom: 2px solid transparent; flex: none; }
.t-app svg { width: 24px; height: 24px; }
.t-chrome { width: 48px; margin-left: 19px; background: #eeeeee; border-bottom-color: #0c4b8a; border-right: 1px solid #b8b8b8; }
.chrome { width: 24px; height: 24px; border-radius: 50%; background: conic-gradient(#ea4335 0 90deg, #fbc02d 90deg 210deg, #34a853 210deg 330deg, #ea4335 330deg); display: flex; align-items: center; justify-content: center; }
.chrome i { border-radius: 50%; background: #3f7fe8; border: 2px solid #fff; box-sizing: content-box; width: 9px; height: 9px; }
.t-files { width: 40px; margin-left: 5px; border-bottom-color: #0c4b8a; }
.t-npp { width: 40px; margin-left: 9px; border-bottom-color: #0c4b8a; }
.t-note { width: 40px; margin-left: 8px; }
.t-vs { width: 40px; margin-left: 10px; border-bottom-color: #0c4b8a; }
.t-code { width: 40px; margin-left: 9px; }
.t-disc { width: 40px; margin-left: 9px; }
.t-tool { width: 40px; margin-left: 10px; }
.tray { margin-left: auto; display: flex; align-items: center; height: 40px; padding-right: 24px; }
.tr-chev { width: 12px; height: 8px; }
.tr-cloud { width: 16px; height: 16px; margin-left: 11px; }
.tr-feather { width: 16px; height: 16px; margin-left: 8px; }
.tr-kakao { width: 16px; height: 16px; background: #ffdf00; margin-left: 8px; display: flex; align-items: center; justify-content: center; }
.tr-kakao i { width: 13px; height: 11px; border-radius: 50%; background: #3a1d1d; }
.tr-mute { width: 16px; height: 16px; margin-left: 7px; }
.tr-x { width: 16px; height: 16px; margin-left: 8px; }
.tr-ime { width: 16px; height: 16px; margin-left: 13px; background: #fff; border: 1px solid #222; display: flex; align-items: center; justify-content: center; font-size: 11px; line-height: 1; color: #000; }
.tr-clock { width: 80px; margin-left: 9px; text-align: center; font-size: 12.500px; line-height: 18px; color: #111; }
.tr-msg { width: 16px; height: 16px; margin-left: 13px; }
```
